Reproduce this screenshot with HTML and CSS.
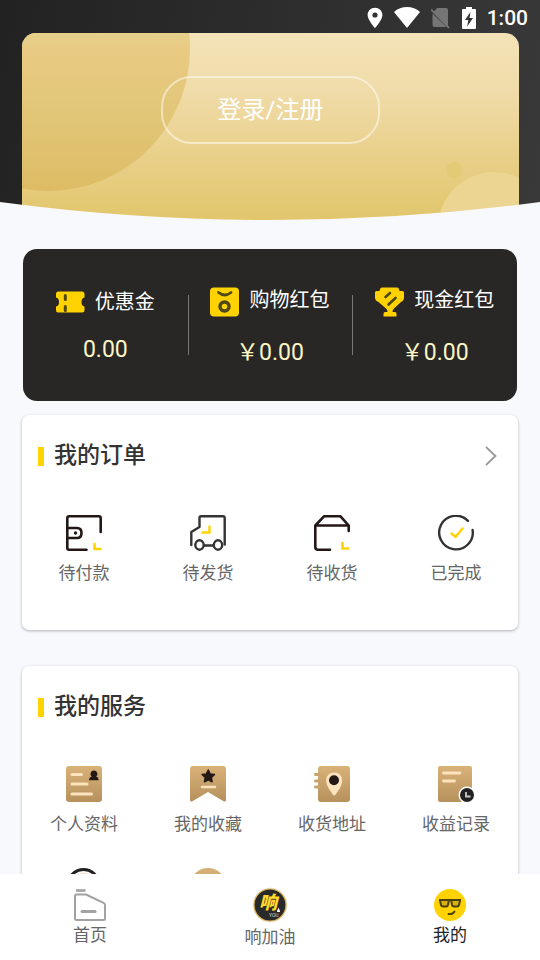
FILE: index.html
```html
<!DOCTYPE html>
<html lang="zh-CN">
<head>
<meta charset="utf-8">
<meta name="viewport" content="width=device-width, initial-scale=1">
<title>我的</title>
<link rel="stylesheet" href="styles.css">
</head>
<body>
<div class="app">
  <main class="content">
    <header class="hero">
      <div class="status">
        <svg width="16" height="22" viewBox="0 0 16 22"><path fill="#fff" fill-rule="evenodd" d="M8 .8C3.800.8.6 4 .6 8c0 5 7.400 13.200 7.400 13.200S15.400 13 15.400 8C15.400 4 12.200.8 8 .8zm0 4.600a2.600 2.600 0 1 1 0 5.200 2.600 2.600 0 0 1 0-5.200z"/></svg>
        <svg width="26" height="22" viewBox="0 0 26 22"><path fill="#fff" d="M0 5C7-1.600 19-1.600 26 5L13 21z"/></svg>
        <svg width="20" height="22" viewBox="0 0 20 22"><path fill="#757575" d="M6 1h9q2 0 2 2v17L2.500 5zM1.500 6.500 15.500 20H3.500q-2 0-2-2z"/><path stroke="#757575" stroke-width="1.800" d="M0 2.500 18 20.800"/></svg>
        <svg width="14" height="22" viewBox="0 0 14 22"><path fill="#fff" d="M4 0h6v2h3q1 0 1 1v18q0 1-1 1H1q-1 0-1-1V3q0-1 1-1h3z"/><path fill="#333" d="M8.400 5 3 13h3.300L5.200 19.500 11 11H7.600z"/></svg>
        <span class="clock">1:00</span>
      </div>
      <div class="member-card">
        <button class="login" type="button">登录/注册</button>
      </div>
      <svg class="curve" viewBox="0 0 540 20" preserveAspectRatio="none"><path fill="#f8f9fd" d="M0 2Q270 38 540 2V20H0z"/></svg>
    </header>

    <section class="wallet">
      <a class="asset asset-plain" href="#">
        <span class="asset-name">
          <svg width="30" height="30" viewBox="0 0 30 30"><path fill="#ffd200" d="M3 4.500h23q2.500 0 2.500 2.500v3.500q-3 .5-3 4.500t3 4.500V23q0 2.500-2.500 2.500H2Q0 25.500 0 23v-3.500q3-.5 3-4.500t-3-4.500V7q0-2.500 2.500-2.500z"/><path stroke="#4f4815" stroke-width="3" stroke-linecap="round" d="M9.300 8.500v4M9.300 19.500v4"/></svg>
          <span>优惠金</span>
        </span>
        <span class="amount">0.00</span>
      </a>
      <a class="asset" href="#">
        <span class="asset-name">
          <svg width="30" height="30" viewBox="0 0 30 30"><rect y=".5" width="29" height="29" rx="4" fill="#ffd200"/><path fill="none" stroke="#4f4815" stroke-width="2.800" stroke-linecap="round" d="M8.500 5.500q6 5 12.500 0"/><circle cx="14.500" cy="19.500" r="4.500" fill="none" stroke="#4f4815" stroke-width="3.400"/></svg>
          <span>购物红包</span>
        </span>
        <span class="amount">￥0.00</span>
      </a>
      <a class="asset" href="#">
        <span class="asset-name">
          <svg width="30" height="30" viewBox="0 0 30 30"><path fill="#ffd200" d="M7 .5h15q2 0 2.500 3.500h3Q29 4 29 5.500v5q0 3-3 4.500L19 21.500q-1.500 1-1.500 3.500H20q1.500 0 1.500 2v2.500h-13V27q0-2 1.500-2h2.500q0-2.500-1.500-3.500L3.500 15Q0 13.500 0 10.500v-5Q0 4 1.500 4h3Q5 .5 7 .5z"/><path stroke="#4f4815" stroke-width="2.600" stroke-linecap="round" d="m10.500 10 4.500-4M13.500 17.500l7-6.500"/></svg>
          <span>现金红包</span>
        </span>
        <span class="amount">￥0.00</span>
      </a>
    </section>

    <section class="panel">
      <div class="panel-head">
        <h2>我的订单</h2>
        <a href="#" aria-label="全部订单"><svg width="12" height="20" viewBox="0 0 12 20"><path fill="none" stroke="#999" stroke-width="1.800" d="m1 1 9.500 9L1 19"/></svg></a>
      </div>
      <div class="grid">
        <a class="tile" href="#">
          <svg width="36" height="36" viewBox="0 0 36 36" fill="none" stroke="#231815" stroke-width="2.600" stroke-linecap="round" stroke-linejoin="round"><path d="M34.700 17V3q0-1.700-1.700-1.700H3Q1.300 1.300 1.300 3v30q0 1.700 1.700 1.700h17.500M1.300 13H11q4.500 0 4.500 5t-4.500 5H1.300"/><circle cx="9.500" cy="18" r="1.700" fill="#231815" stroke="none"/><path stroke="#ffd200" d="M28.500 29v5h6"/></svg>
          <span>待付款</span>
        </a>
        <a class="tile" href="#">
          <svg width="36" height="36" viewBox="0 0 36 36" fill="none" stroke="#333" stroke-width="2.400" stroke-linecap="round" stroke-linejoin="round"><path d="M1.300 30V17L9.500 12V3q0-1.700 1.700-1.700H33q1.700 0 1.700 1.700v26.500M14.500 30.500H23"/><ellipse cx="9.500" cy="30" rx="4.200" ry="4.700"/><ellipse cx="28" cy="30" rx="4.200" ry="4.700"/><path stroke="#ffd200" d="M19.500 11.500v6h-7"/></svg>
          <span>待发货</span>
        </a>
        <a class="tile" href="#">
          <svg width="36" height="36" viewBox="0 0 36 36" fill="none" stroke="#231815" stroke-width="2.600" stroke-linecap="round" stroke-linejoin="round"><path d="M16 34.700H4q-2.700 0-2.700-2.700V10.500L10 1.300h16.500l8.200 9.200V16M1.300 10.500h33.400"/><path stroke="#ffd200" d="M28.500 28v5.500h5.500"/></svg>
          <span>待收货</span>
        </a>
        <a class="tile" href="#">
          <svg width="36" height="36" viewBox="0 0 36 36" fill="none" stroke="#333" stroke-width="2.400" stroke-linecap="round" stroke-linejoin="round"><path d="M30 5.800A16.800 16.800 0 1 0 34.600 15"/><path stroke="#ffd200" d="m13.500 18.500 4 3.500 7-8.500"/></svg>
          <span>已完成</span>
        </a>
      </div>
    </section>

    <section class="panel">
      <div class="panel-head">
        <h2>我的服务</h2>
      </div>
      <div class="grid">
        <a class="tile" href="#">
          <svg width="36" height="36" viewBox="0 0 36 36"><defs><linearGradient id="tan" x1="0" y1="0" x2="0" y2="1"><stop stop-color="#d9b278"/><stop offset="1" stop-color="#b6915d"/></linearGradient></defs><rect width="36" height="36" rx="3" fill="url(#tan)"/><path stroke="#fde3bd" stroke-width="3" stroke-linecap="round" d="M6 8.500h9.500M6 18h15M6 28h19.500"/><path fill="#231815" d="M28 4.500a3.400 3.400 0 0 1 2.200 6q2.500.8 2.500 3.700H23q0-2.900 2.700-3.700a3.400 3.400 0 0 1 2.300-6z"/></svg>
          <span>个人资料</span>
        </a>
        <a class="tile" href="#">
          <svg width="36" height="36" viewBox="0 0 36 36"><path fill="url(#tan)" d="M3 0h30q3 0 3 3v31q0 2-2 1.500L18 26 2 35.500Q0 36 0 34V3q0-3 3-3z"/><path fill="#231815" stroke="#231815" stroke-width="1.500" stroke-linejoin="round" d="m18.300 4 1.900 3.900 4.300.6-3.100 3 .7 4.300-3.800-2-3.800 2 .7-4.300-3.100-3 4.300-.6z"/><path stroke="#fde3bd" stroke-width="2.500" stroke-linecap="round" d="M12 21h13"/></svg>
          <span>我的收藏</span>
        </a>
        <a class="tile" href="#">
          <svg width="36" height="36" viewBox="0 0 36 36"><rect x="4" width="32" height="36" rx="3" fill="url(#tan)"/><path stroke="#c9a36b" stroke-width="2.800" stroke-linecap="round" d="M1.400 8.500H5M1.400 15H5M1.400 21H5"/><path fill="#fde3bd" d="M20.200 6.500c5 0 8 3.500 8 8 0 5-3.500 9.500-6.500 14q-1.500 2-3 0c-3-4.500-6.500-9-6.500-14 0-4.500 3-8 8-8z"/><circle cx="20" cy="14.300" r="5" fill="#231815"/></svg>
          <span>收货地址</span>
        </a>
        <a class="tile" href="#">
          <svg width="36" height="36" viewBox="0 0 36 36"><rect width="34" height="36" rx="2" fill="url(#tan)"/><path stroke="#fde3bd" stroke-width="2.800" stroke-linecap="round" d="M5.500 7H22M5.500 15h11"/><circle cx="29" cy="29" r="8.500" fill="#fff"/><circle cx="29" cy="29" r="7" fill="#222"/><path fill="none" stroke="#ccc" stroke-width="1.800" d="M28 26v4.500h4.500"/></svg>
          <span>收益记录</span>
        </a>
        <a class="tile" href="#" aria-label="客服">
          <svg width="36" height="36" viewBox="0 0 36 36"><circle cx="17.500" cy="17" r="15.500" fill="#fff" stroke="#222" stroke-width="3"/><circle cx="17.500" cy="16" r="11.500" fill="#fde3d0"/></svg>
        </a>
        <a class="tile" href="#" aria-label="设置">
          <svg width="36" height="36" viewBox="0 0 36 36"><circle cx="18" cy="18" r="18" fill="url(#tan)"/></svg>
        </a>
      </div>
    </section>
  </main>

  <nav class="tabs">
    <a class="tab" href="#">
      <svg width="32" height="32" viewBox="0 0 32 32" fill="none" stroke="#a2a2a2" stroke-width="2" stroke-linejoin="round"><path stroke-width="2.600" d="M2 1.500h9.500"/><path d="M1 7q0-1.500 1.500-1.500H12l17.500 8.300q1.500.7 1.500 2.200v13.500q0 1.500-1.500 1.500h-27Q1 31 1 29.500z"/><path stroke-width="3" stroke-linecap="round" d="M8 22.500h13"/></svg>
      <span>首页</span>
    </a>
    <a class="tab" href="#">
      <svg width="36" height="36" viewBox="0 0 36 36"><circle cx="18" cy="18" r="17.500" fill="#eee"/><circle cx="18" cy="18" r="16" fill="#292929" stroke="#d9b04a" stroke-width="1.200"/><text class="logo-main" x="7" y="22">响</text><text class="logo-sub" x="17" y="30">YOU</text><path fill="#fff" d="M26.500 20.500 28 24v1h-3v-1z"/></svg>
      <span>响加油</span>
    </a>
    <a class="tab active" href="#">
      <svg width="32" height="32" viewBox="0 0 32 32"><circle cx="16" cy="16" r="16" fill="#ffd200"/><path fill="#d6b20c" stroke="#4b4010" stroke-width="2" stroke-linejoin="round" d="M5 11h22M6 11.500l1 4.500q.3 1.500 2 1.500h3q1.700 0 2-1.500l.8-4.500M17.200 11.500 18 16q.3 1.500 2 1.500h3q1.700 0 2-1.500l1-4.500"/><path fill="none" stroke="#4b4010" stroke-width="1.800" stroke-linecap="round" d="M14.500 25q4.500.5 6-2.500"/></svg>
      <span>我的</span>
    </a>
  </nav>
</div>
</body>
</html>
```
FILE: styles.css
```css
* {
  box-sizing: border-box;
}

body {
  margin: 0;
  background: #f8f9fd;
  color: #666;
  font-family: Roboto, "Noto Sans CJK SC", sans-serif;
  font-size: 17px;
  line-height: 24px;
}

a {
  color: inherit;
  text-decoration: none;
}

svg {
  display: block;
  flex: none;
}

.app {
  display: flex;
  flex-direction: column;
  height: 100vh;
}

.content {
  flex: 1;
  min-height: 0;
  overflow-y: auto;
  scrollbar-width: none;
}

/* Header */
.hero {
  position: relative;
  background: linear-gradient(100deg, #222 0%, #2d2d2d 50%, #393939 100%);
}

.status {
  display: flex;
  align-items: center;
  justify-content: flex-end;
  gap: 11px;
  padding: 3px 12px 0 0;
  height: 33px;
}

.clock {
  color: #fff;
  font-size: 21px;
  font-weight: 500;
}

.member-card {
  position: relative;
  display: flex;
  justify-content: center;
  margin: 0 21px 0 22px;
  padding: 43px 0 76px;
  overflow: hidden;
  border-radius: 14px 14px 0 0;
  background:
    radial-gradient(circle at calc(100% - 65px) 137px, #e2ca76 7px, transparent 9px),
    linear-gradient(#f3e3b7, #f0dcaa 30%, #e9d08a 65%, #e1c66c);
}

.member-card::before,
.member-card::after {
  content: "";
  position: absolute;
  border-radius: 50%;
}

.member-card::before {
  top: -126px;
  left: -116px;
  width: 284px;
  height: 284px;
  background: linear-gradient(#e6cf8a 45%, #e9ca82 50%, #e1c677 75%, #ddbc64);
}

.member-card::after {
  top: 139px;
  right: -31px;
  width: 112px;
  height: 112px;
  background: #ecd592;
}

.login {
  position: relative;
  z-index: 1;
  width: 219px;
  height: 68px;
  padding: 0;
  border: 2px solid rgba(255, 255, 255, 0.5);
  border-radius: 31px;
  background: transparent;
  color: #fff;
  font: inherit;
  font-size: 24px;
}

.curve {
  position: absolute;
  bottom: 0;
  left: 0;
  width: 100%;
  height: 20px;
}

/* Balances */
.wallet {
  display: grid;
  grid-template-columns: repeat(3, 1fr);
  margin: 29px 23px 14px;
  padding: 38px 0 33px;
  border-radius: 14px;
  background: #282725;
}

.asset {
  position: relative;
  display: flex;
  flex-direction: column;
  align-items: center;
  gap: 21px;
}

.asset + .asset::before {
  content: "";
  position: absolute;
  top: 8px;
  left: 0;
  width: 1px;
  height: 60px;
  background: #777;
}

.asset-name {
  display: flex;
  gap: 9px;
  color: #fff;
  font-size: 20px;
  line-height: 26px;
}

.asset-plain {
  gap: 18px;
}

.asset-plain .asset-name {
  align-items: center;
}

.amount {
  color: #fbf5c4;
  font-size: 23px;
  line-height: 30px;
}

/* Cards */
.panel {
  margin: 0 22px 36px;
  padding: 24px 0 45px;
  border-radius: 7px;
  background: #fff;
  box-shadow: 0 1px 3px rgba(0, 0, 0, 0.3);
}

.panel-head {
  display: flex;
  align-items: center;
  justify-content: space-between;
  padding: 0 21px 0 16px;
}

.panel-head h2 {
  display: flex;
  align-items: center;
  gap: 10px;
  margin: 0;
  color: #333;
  font-size: 23px;
  font-weight: 500;
  line-height: 34px;
}

.panel-head h2::before {
  content: "";
  width: 6px;
  height: 19px;
  background: #ffd200;
}

.grid {
  display: grid;
  grid-template-columns: repeat(4, 1fr);
  row-gap: 32px;
  margin-top: 42px;
}

.tile {
  display: flex;
  flex-direction: column;
  align-items: center;
  gap: 10px;
}

/* Bottom navigation */
.tabs {
  display: grid;
  grid-template-columns: repeat(3, 1fr);
  align-items: center;
  padding: 13px 0 11px;
  background: #fff;
}

.tab {
  display: flex;
  flex-direction: column;
  align-items: center;
  gap: 2px;
}

.active {
  color: #222;
}

.logo-main {
  fill: #ffd829;
  font-size: 18px;
  font-style: italic;
  font-weight: 900;
}

.logo-sub {
  fill: #ddd;
  font-size: 5px;
}
```
